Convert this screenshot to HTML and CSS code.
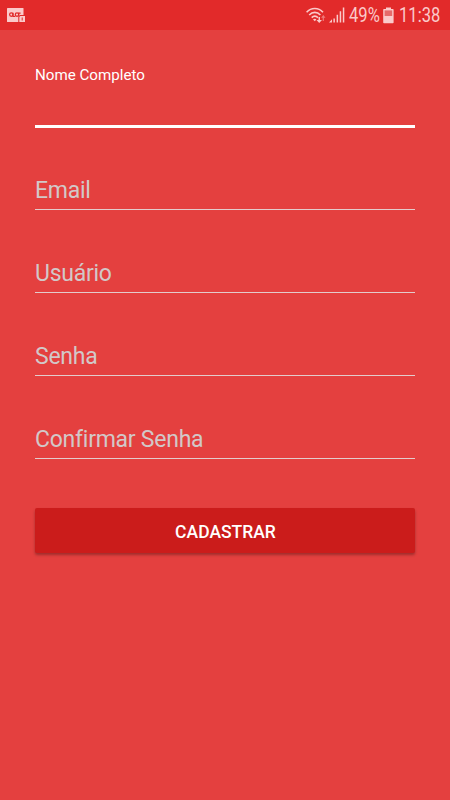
FILE: index.html
```
<!DOCTYPE html>
<html lang="pt-BR">
<head>
    <meta charset="UTF-8">
    <meta name="viewport" content="width=device-width, initial-scale=1.0">
    <title>Cadastro</title>
    <link rel="stylesheet" href="styles.css">
</head>
<body>
    <header class="status-bar">
        <svg class="icon-app" width="19" height="16" viewBox="0 0 19 16">
            <rect x="0" y="1" width="16.5" height="14" rx="0.6" fill="#fbcaca"/>
            <g fill="none" stroke="#e02929" stroke-width="1.2">
                <circle cx="4.3" cy="7.6" r="1.7"/>
                <circle cx="10" cy="7.6" r="1.7"/>
                <path d="M6 5.8v3.6h2.3M11.8 7.6V6.2h1.8"/>
            </g>
            <path d="M11.3 16V9.2L12.8 8h5.5v8z" fill="#e02929"/>
            <path d="M12.3 15V10l1-1h4.7v6z" fill="#fbcaca"/>
            <path d="M15.2 10.5v3" stroke="#e02929" stroke-width="1"/>
        </svg>
        <div class="status-info">
            <svg class="icon-wifi" width="20" height="17" viewBox="0 0 20 17">
                <g fill="none" stroke="#fbcaca" stroke-width="1.6">
                    <path d="M0.6 5.2C5.2 0.3 12.4 0.3 17 5.2"/>
                    <path d="M3.2 8C6.5 4.5 11.1 4.5 14.4 8"/>
                    <path d="M5.7 10.6C7.6 8.6 10 8.6 11.9 10.6"/>
                </g>
                <path d="M7 12.4Q8.8 11 10.4 12.4L8.8 14.2z" fill="#fbcaca"/>
                <path d="M12.5 10h1.5v3h2L13.2 16l-2.7-3h2z" fill="#fbcaca"/>
                <path d="M17.3 8l2.2 2.8h-1.6V14h-1.2v-3.2h-1.6z" fill="#ee7b7b"/>
            </svg>
            <svg class="icon-signal" width="16" height="16" viewBox="0 0 16 16" fill="#fbcaca">
                <path d="M0 15.5L3 12.3V15.5zM4.4 11.4h1.5v4.1H4.4zM7.6 7.8h1.5v7.7H7.6zM10.7 4.2h1.5v11.3h-1.5zM13.8 0.6h1.5v14.9h-1.5z"/>
            </svg>
            <span class="battery-level"><span class="condensed">49%</span></span>
            <svg class="icon-battery" width="11" height="17" viewBox="0 0 11 17">
                <path d="M3 0.5h5v2H3z" fill="#fbcaca"/>
                <rect x="0.2" y="2" width="10.4" height="14.3" rx="0.8" fill="#fbcaca"/>
                <path d="M1.6 3.4h7.6v5.6H1.6z" fill="#e66a6a"/>
            </svg>
            <span class="clock"><span class="condensed">11:38</span></span>
        </div>
    </header>

    <main class="form">
        <div class="field active">
            <span class="label">Nome Completo</span>
        </div>
        <div class="field"><span class="hint">Email</span></div>
        <div class="field"><span class="hint">Usuário</span></div>
        <div class="field"><span class="hint">Senha</span></div>
        <div class="field"><span class="hint">Confirmar Senha</span></div>
        <button class="btn-submit">CADASTRAR</button>
    </main>
</body>
</html>
```

FILE: styles.css
```
* {
    margin: 0;
    padding: 0;
    box-sizing: border-box;
}

body {
    min-height: 800px;
    background-color: #e4403f;
    font-family: Roboto, sans-serif;
    color: white;
}

/* Status bar */
.status-bar {
    display: flex;
    justify-content: space-between;
    align-items: center;
    height: 30px;
    padding: 0 10px 0 7px;
    background-color: #e22a2a;
    color: #fbcaca;
}

.status-info {
    display: flex;
    align-items: center;
    font-size: 19.5px;
    line-height: 30px;
}

.icon-wifi {
    margin-right: 3px;
}

.icon-signal {
    margin-right: 4px;
}

.battery-level {
    width: 31px;
    margin-right: 3px;
}

.icon-battery {
    margin-right: 5px;
}

.clock {
    width: 41px;
}

.condensed {
    display: inline-block;
    transform: translateY(1px) scaleX(0.85);
    transform-origin: left;
}

/* Form */
.form {
    padding: 0 35px;
}

.field {
    display: flex;
    flex-direction: column;
    justify-content: flex-end;
    height: 83px;
    padding-bottom: 4px;
    border-bottom: 1px solid #e3cccc;
}

.field.active {
    justify-content: flex-start;
    height: 98px;
    margin-bottom: -1px;
    padding-top: 36px;
    border-bottom: 3px solid white;
}

.label {
    font-size: 15.15px;
    line-height: 18px;
}

.hint {
    font-size: 23px;
    line-height: 28px;
    letter-spacing: -0.25px;
    color: #d2c8c8;
}

.btn-submit {
    display: block;
    width: 100%;
    height: 45px;
    margin-top: 49px;
    padding: 2px 0 0 1px;
    border: none;
    border-radius: 2px;
    background-color: #cb1c1b;
    box-shadow: 0 2px 3px rgba(0, 0, 0, 0.3);
    color: white;
    font-family: Roboto, sans-serif;
    font-size: 17.5px;
    font-weight: 500;
}
```
